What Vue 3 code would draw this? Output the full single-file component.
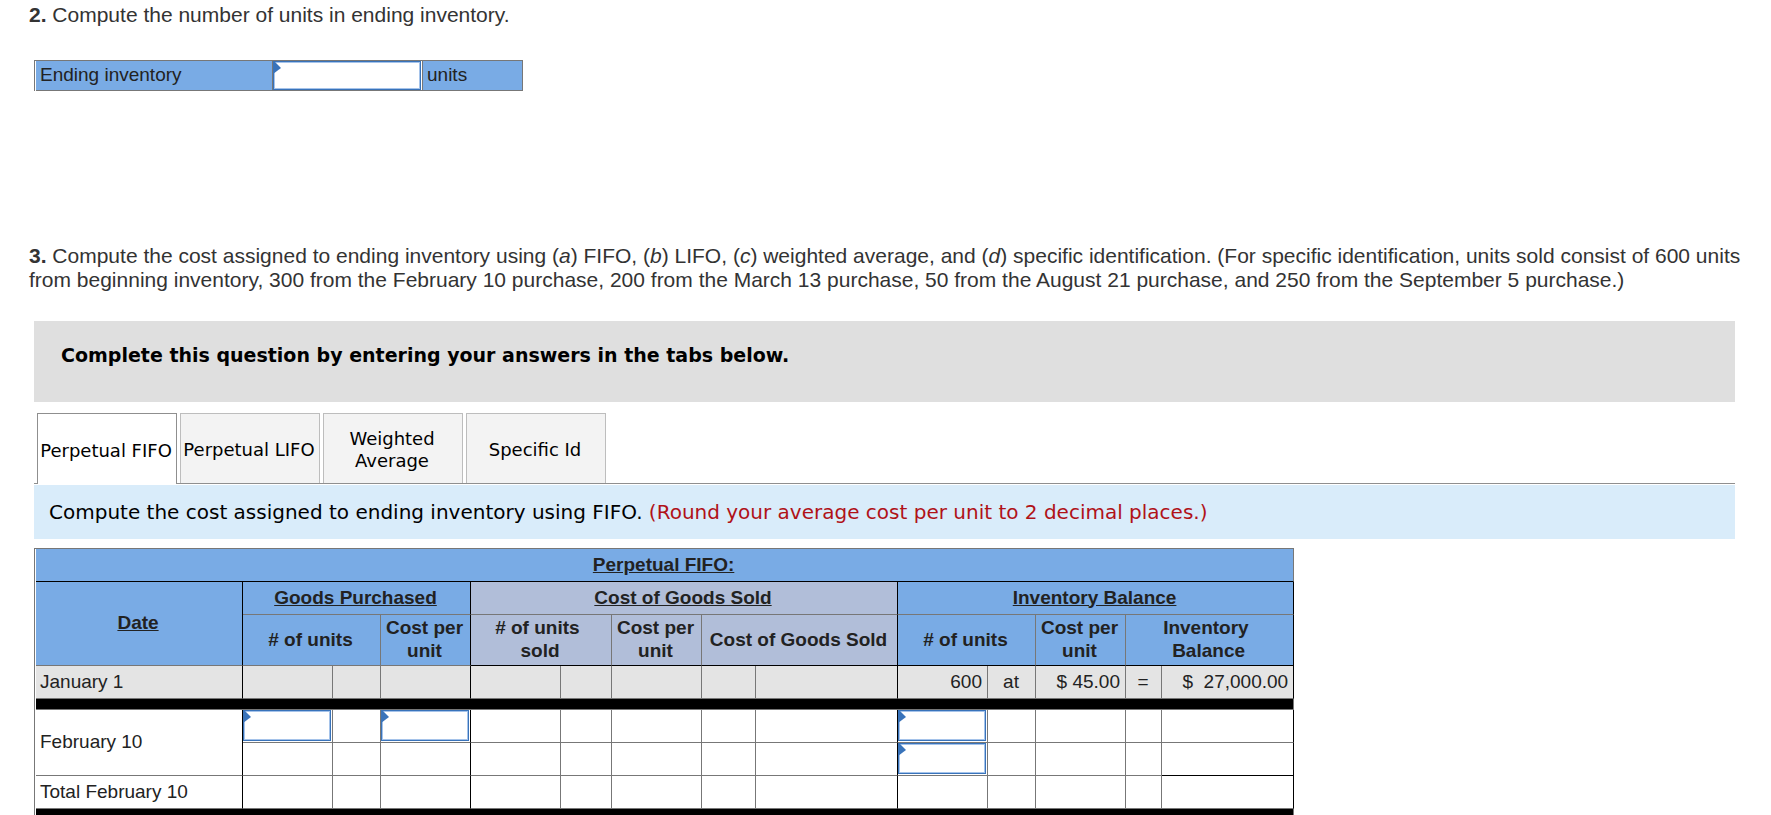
<template>
  <main class="page">
    <p class="question">
      <b>2.</b> Compute the number of units in ending inventory.
    </p>

    <table class="sheet ending">
      <colgroup>
        <col class="w-name" />
        <col class="w-value" />
        <col class="w-unit" />
      </colgroup>
      <tbody>
        <tr>
          <td class="blue"><label for="ending-units">Ending inventory</label></td>
          <td class="entry">
            <input id="ending-units" v-model="endingUnits" type="text" />
            <span class="flag"></span>
          </td>
          <td class="blue">units</td>
        </tr>
      </tbody>
    </table>

    <p class="question second">
      <b>3.</b> Compute the cost assigned to ending inventory using (<i>a</i>) FIFO, (<i>b</i>) LIFO, (<i>c</i>) weighted average, and (<i>d</i>) specific identification. (For specific identification, units sold consist of 600 units from beginning inventory, 300 from the February 10 purchase, 200 from the March 13 purchase, 50 from the August 21 purchase, and 250 from the September 5 purchase.)
    </p>

    <section class="answer">
      <h2 class="banner">Complete this question by entering your answers in the tabs below.</h2>

      <div class="tabs" role="tablist">
        <button
          v-for="tab in tabs"
          :key="tab"
          type="button"
          role="tab"
          class="tab"
          :class="{ active: tab === activeTab }"
          :aria-selected="tab === activeTab"
          @click="activeTab = tab"
        >
          {{ tab }}
        </button>
      </div>

      <p class="instruction">
        Compute the cost assigned to ending inventory using FIFO.
        <span class="note">(Round your average cost per unit to 2 decimal places.)</span>
      </p>

      <table class="sheet fifo">
        <colgroup>
          <col class="w-date" />
          <col v-for="col in columns" :key="col.key" :class="col.width" />
        </colgroup>
        <thead>
          <tr>
            <th colspan="14" class="blue line"><u>Perpetual FIFO:</u></th>
          </tr>
          <tr>
            <th rowspan="2" class="blue edge"><u>Date</u></th>
            <th colspan="3" class="blue edge"><u>Goods Purchased</u></th>
            <th colspan="5" class="lilac edge"><u>Cost of Goods Sold</u></th>
            <th colspan="5" class="blue edge"><u>Inventory Balance</u></th>
          </tr>
          <tr class="sub">
            <th colspan="2" class="blue"># of units</th>
            <th class="blue edge">Cost per unit</th>
            <th colspan="2" class="lilac line"># of units&nbsp;<br />sold</th>
            <th class="lilac line">Cost per unit</th>
            <th colspan="2" class="lilac line edge">Cost of Goods Sold</th>
            <th colspan="2" class="blue line"># of units</th>
            <th class="blue line">Cost per unit</th>
            <th colspan="2" class="blue line edge">Inventory&nbsp;<br />Balance</th>
          </tr>
        </thead>
        <tbody>
          <template v-for="row in rows" :key="row.id">
            <tr v-if="row.divider" class="divider">
              <td colspan="14"></td>
            </tr>
            <tr v-else :class="{ shaded: row.shaded }">
              <td v-if="row.label" :rowspan="row.span || 1" class="edge">{{ row.label }}</td>
              <td
                v-for="col in columns"
                :key="col.key"
                :class="[col.align, {
                  edge: col.edge,
                  entry: isInput(row, col),
                  line: row.sum && col.key === 'balance',
                }]"
              >
                <template v-if="isInput(row, col)">
                  <input
                    v-model="answers[row.id + col.key]"
                    type="text"
                    :aria-label="row.name + ' ' + col.name"
                  />
                  <span class="flag"></span>
                </template>
                <template v-else-if="row.values">{{ row.values[col.key] }}</template>
              </td>
            </tr>
          </template>
        </tbody>
      </table>
    </section>
  </main>
</template>

<script setup>
import { ref, reactive } from 'vue';

const endingUnits = ref('');
const answers = reactive({});

const tabs = ['Perpetual FIFO', 'Perpetual LIFO', 'Weighted Average', 'Specific Id'];
const activeTab = ref('Perpetual FIFO');

/* every column after the date; edge = black rule on the right */
const columns = [
  { key: 'bought', name: 'units purchased', width: 'w-num' },
  { key: 'boughtAt', width: 'w-at' },
  { key: 'boughtCost', name: 'cost per unit purchased', width: 'w-num', edge: true },
  { key: 'sold', width: 'w-num' },
  { key: 'soldAt', width: 'w-sold-at' },
  { key: 'soldCost', width: 'w-num' },
  { key: 'soldEq', width: 'w-sold-eq' },
  { key: 'cogs', width: 'w-cogs', edge: true },
  { key: 'units', name: 'units in balance', width: 'w-num', align: 'right' },
  { key: 'at', width: 'w-at', align: 'center' },
  { key: 'cost', width: 'w-num', align: 'right' },
  { key: 'eq', width: 'w-eq', align: 'center' },
  { key: 'balance', width: 'w-balance', align: 'right', edge: true },
];

const rows = [
  {
    id: 'jan1',
    label: 'January 1',
    shaded: true,
    values: { units: '600', at: 'at', cost: '$ 45.00', eq: '=', balance: '$\u00a0 27,000.00' },
  },
  { id: 'div1', divider: true },
  { id: 'feb10a', name: 'February 10', label: 'February 10', span: 2, inputs: ['bought', 'boughtCost', 'units'] },
  { id: 'feb10b', name: 'February 10', inputs: ['units'], sum: true },
  { id: 'feb10t', label: 'Total February 10' },
  { id: 'div2', divider: true },
];

const isInput = (row, col) => !!row.inputs && row.inputs.includes(col.key);
</script>

<style>
body {
  margin: 0;
  background: #fff;
}
</style>

<style scoped>
.page {
  padding: 3px 25px 0 29px;
  font-family: Arial, "Liberation Sans", sans-serif;
  color: #333;
}

.question {
  margin: 0;
  font-size: 21px;
  line-height: 24px;
}

.second {
  margin-top: 153px;
}

/* shared look of both answer tables */
.sheet {
  box-sizing: border-box;
  table-layout: fixed;
  border-collapse: separate;
  border-spacing: 0;
  border-top: 1px solid #777;
  border-left: 1px solid #777;
  padding-left: 1px;
  font-size: 19px;
  line-height: 23px;
}

.sheet th,
.sheet td {
  box-sizing: border-box;
  height: 33px;
  padding: 0 5px 2px 4px;
  border-right: 1px solid #777;
  border-bottom: 1px solid #777;
  color: #222;
}

.sheet th {
  padding: 0 4px 2px 2px;
}

.sheet .blue {
  background: #79abe5;
}

.sheet .lilac {
  background: #b1bed9;
}

.sheet .edge {
  border-right-color: #000;
}

.sheet .line {
  border-bottom-color: #000;
}

.sheet .right {
  text-align: right;
}

.sheet .center {
  text-align: center;
}

.sheet .entry {
  position: relative;
  padding: 0 1px 0 0;
  vertical-align: top;
}

.entry input {
  display: block;
  box-sizing: border-box;
  width: 100%;
  height: 31px;
  margin: 0;
  padding: 0 4px 0 10px;
  border: 1px solid #3973ba;
  border-radius: 0;
  outline: none;
  box-shadow: inset 0 0 0 1px #a5c3ea;
  background: #fff;
  font: inherit;
  text-align: right;
}

.flag {
  position: absolute;
  top: 0;
  left: 0;
  width: 8px;
  height: 13px;
  background: #3973ba;
  clip-path: polygon(0 0, 2px 1px, 100% 7px, 0 100%);
  pointer-events: none;
}

.ending {
  width: 489px;
  margin-top: 33px;
  margin-left: 5px;
}

.ending td {
  height: 30px;
}

.ending input {
  height: 29px;
}

.w-name { width: 237px; }
.w-value { width: 150px; }
.w-unit { width: 100px; }

.answer {
  margin: 29px 11px 0 5px;
}

.banner {
  margin: 0;
  padding: 22px 27px 35px;
  background: #dfdfdf;
  color: #000;
  font-family: Verdana, "DejaVu Sans", sans-serif;
  font-size: 19px;
  line-height: 24px;
  font-weight: bold;
}

.tabs {
  display: flex;
  gap: 3px;
  margin-top: 11px;
  padding-left: 3px;
  border-bottom: 1px solid #8f8f8f;
}

.tab {
  box-sizing: border-box;
  width: 140px;
  height: 70px;
  padding: 3px 2px 0 0;
  border: 1px solid #bdbdbd;
  border-bottom: 0;
  background: #f3f3f3;
  color: #000;
  font-family: Verdana, "DejaVu Sans", sans-serif;
  font-size: 18px;
  line-height: 22px;
  cursor: pointer;
}

.tab.active {
  height: 71px;
  margin-bottom: -1px;
  border-color: #8f8f8f;
  background: #fff;
}

.instruction {
  margin: 1px 0 9px;
  padding: 15px;
  background: #d9ecfa;
  color: #000;
  font-family: Verdana, "DejaVu Sans", sans-serif;
  font-size: 20px;
  line-height: 24px;
}

.note {
  color: #b01218;
}

.fifo {
  width: 1260px;
}

.fifo .sub th {
  height: 51px;
}

.fifo .shaded td {
  background: #e4e4e4;
}

.fifo .divider td {
  height: 11px;
  padding: 0;
  background: #000;
}

.w-date { width: 207px; }
.w-num { width: 90px; }
.w-at { width: 48px; }
.w-sold-at { width: 51px; }
.w-sold-eq { width: 54px; }
.w-cogs { width: 142px; }
.w-eq { width: 36px; }
.w-balance { width: 132px; }
</style>
